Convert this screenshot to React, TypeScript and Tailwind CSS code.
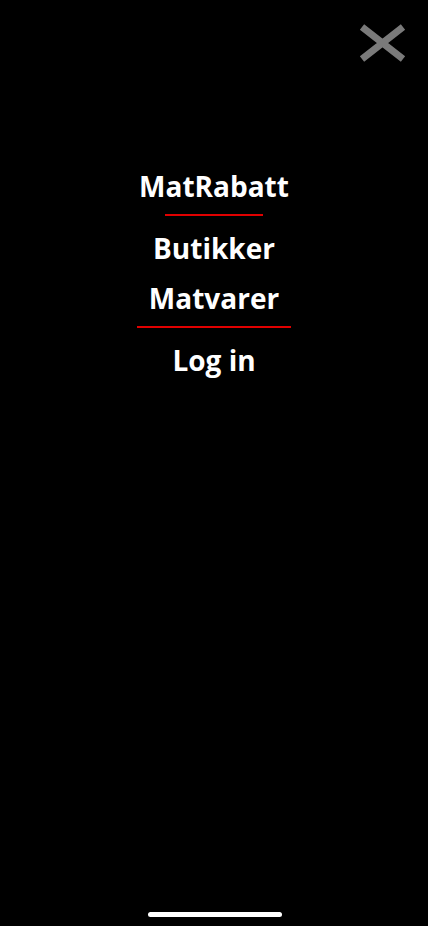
export default function App() {
  return (
    <div
      className="relative w-[428px] h-[926px] bg-black text-white overflow-hidden"
      style={{ fontFamily: '"Open Sans", "Noto Sans", sans-serif' }}
    >
      {/* close */}
      <button className="absolute top-[23px] left-[358px] w-[49px] h-[40px]" aria-label="Close">
        <svg viewBox="0 0 49 40" width="49" height="40">
          <path d="M4 4 L45 36 M45 4 L4 36" stroke="#7a7a7a" strokeWidth="7" strokeLinecap="butt" />
        </svg>
      </button>

      <nav className="flex flex-col items-center pt-[170px]">
        <a className="text-[28px] leading-8 font-bold">MatRabatt</a>
        <div className="mt-3 h-0.5 w-[98px] bg-[#e00000]" />
        <a className="mt-4 text-[28px] leading-8 font-bold">Butikker</a>
        <a className="mt-[18px] text-[28px] leading-8 font-bold">Matvarer</a>
        <div className="mt-3 h-0.5 w-[154px] bg-[#e00000]" />
        <a className="mt-4 text-[28px] leading-8 font-bold">Log in</a>
      </nav>

      {/* home indicator */}
      <div className="absolute bottom-[9px] left-[148px] w-[134px] h-[5px] rounded-full bg-white" />
    </div>
  );
}
